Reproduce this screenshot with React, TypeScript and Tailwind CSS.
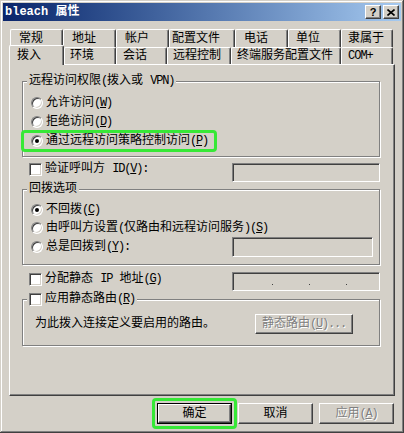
import React from 'react';

// classic 3D borders
const raised =
  'border border-t-white border-l-white border-r-[#404040] border-b-[#404040] shadow-[inset_-1px_-1px_#808080] bg-[#D4D0C8]';
const sunken =
  'border border-t-[#808080] border-l-[#808080] border-r-white border-b-white shadow-[inset_1px_1px_#404040,inset_-1px_-1px_#D4D0C8]';
const etched = 'border border-[#808080] shadow-[inset_1px_1px_#fff,1px_1px_#fff]';
const tabEdge =
  'border-t border-l border-r border-t-white border-l-white border-r-[#404040] rounded-t-[2px] shadow-[inset_-1px_0_#808080] bg-[#D4D0C8]';
const dimmed = 'text-[#808080] [text-shadow:1px_1px_0_#fff]';
const glow = 'rounded-[4px] border-[3px] border-[#37e837]';

// half-width latin, squeezed to ~6px per char like the dialog font
const A = ({ children }: { children: React.ReactNode }) => (
  <span className="tracking-[-1.2px]">{children}</span>
);

const Key = ({ k }: { k: string }) => (
  <A>
    (<u>{k}</u>)
  </A>
);

const Radio = ({ checked = false }: { checked?: boolean }) => (
  <span className={`flex h-[12px] w-[12px] shrink-0 items-center justify-center rounded-full bg-white ${sunken}`}>
    {checked && <span className="h-[4px] w-[4px] rounded-full bg-black" />}
  </span>
);

const Check = () => <span className={`block h-[13px] w-[13px] shrink-0 bg-white ${sunken}`} />;

const backTabs = [
  { label: '常规', cls: 'w-[53px] pl-[8px]' },
  { label: '地址', cls: 'w-[53px] pl-[8px]' },
  { label: '帐户', cls: 'w-[53px] pl-[8px]' },
  { label: '配置文件', cls: 'w-[66px] pl-[2px]' },
  { label: '电话', cls: 'w-[53px] pl-[8px]' },
  { label: '单位', cls: 'w-[53px] pl-[7px]' },
  { label: '隶属于', cls: 'w-[52px] pl-[6px]' },
];

const frontTabs = [
  { label: '环境', cls: 'w-[52px] pl-[5px]' },
  { label: '会话', cls: 'w-[51px] pl-[6px]' },
  { label: '远程控制', cls: 'w-[64px] pl-[5px]' },
  { label: '终端服务配置文件', cls: 'w-[110px] pl-[5px]' },
  { label: 'COM+', cls: 'w-[52px] pl-[6px] tracking-[-1px]' },
];

export default function App() {
  return (
    <div className="h-[433px] w-[404px] bg-[#D4D0C8] p-[3px] font-['Liberation_Mono','Noto_Sans_CJK_SC',monospace] text-[12px] leading-[14px] text-black shadow-[inset_-1px_-1px_#404040,inset_1px_1px_#D4D0C8,inset_-2px_-2px_#808080,inset_2px_2px_#fff]">
      {/* Title bar */}
      <div className="flex h-[18px] items-center bg-linear-to-r from-[#0A246A] to-[#A6CAF0] pl-[2px] pr-[2px]">
        <span className="font-bold text-white">bleach 属性</span>
        <div className="ml-auto flex gap-[2px]">
          <div className={`flex h-[14px] w-[16px] items-center justify-center font-['Liberation_Sans',sans-serif] text-[11px] font-bold leading-none ${raised}`}>
            ?
          </div>
          <div className={`flex h-[14px] w-[16px] items-center justify-center ${raised}`}>
            <svg width="8" height="7" viewBox="0 0 8 7">
              <path d="M0.5 0.5 L7.5 6.5 M7.5 0.5 L0.5 6.5" stroke="#000" strokeWidth="1.6" fill="none" />
            </svg>
          </div>
        </div>
      </div>

      {/* Tabs */}
      <div className="mt-[8px]">
        <div className="ml-[7px] flex h-[18px]">
          {backTabs.map((t) => (
            <div key={t.label} className={`flex h-[18px] items-center ${tabEdge} ${t.cls}`}>
              {t.label}
            </div>
          ))}
        </div>
        <div className="ml-[6px] flex h-[17px] items-start">
          <div className={`relative z-10 -mt-[2px] flex h-[20px] w-[55px] items-center pl-[7px] ${tabEdge}`}>拨入</div>
          {frontTabs.map((t) => (
            <div key={t.label} className={`flex h-[17px] items-center ${tabEdge} ${t.cls}`}>
              {t.label}
            </div>
          ))}
        </div>
      </div>

      {/* Panel */}
      <div className={`mx-[6px] h-[332px] pl-[12px] pt-[9px] ${raised}`}>
        <fieldset className={`w-[358px] ${etched}`}>
          <legend className="ml-[4px] bg-[#D4D0C8] px-[2px] leading-[14px]">
            远程访问权限<A>(</A>拨入或 <A>VPN)</A>
          </legend>
          <div className="pb-[6px] pl-[8px] pt-[5px]">
            <div className="flex h-[19px] items-center gap-[3px]">
              <Radio />
              <span>
                允许访问<Key k="W" />
              </span>
            </div>
            <div className="flex h-[19px] items-center gap-[3px]">
              <Radio />
              <span>
                拒绝访问<Key k="D" />
              </span>
            </div>
            <div className={`-mb-[2px] -ml-[10px] -mt-[1px] flex h-[22px] w-[196px] items-center gap-[3px] pl-[7px] ${glow}`}>
              <Radio checked />
              <span>
                通过远程访问策略控制访问<Key k="P" />
              </span>
            </div>
          </div>
        </fieldset>

        <div className="mt-[6px] flex h-[19px] w-[358px] items-start pl-[7px]">
          <div className="flex items-center gap-[3px] leading-[13px]">
            <Check />
            <span>
              验证呼叫方 <A>ID</A><Key k="V" /><A>:</A>
            </span>
          </div>
          <div className={`ml-auto h-[19px] w-[148px] bg-[#D4D0C8] ${sunken}`} />
        </div>

        <fieldset className={`w-[358px] ${etched}`}>
          <legend className="ml-[4px] bg-[#D4D0C8] px-[2px] leading-[14px]">回拨选项</legend>
          <div className="pb-[7px] pl-[8px] pr-[6px] pt-[5px]">
            <div className="flex h-[18px] items-center gap-[3px]">
              <Radio checked />
              <span>
                不回拨<Key k="C" />
              </span>
            </div>
            <div className="flex h-[18px] items-center gap-[3px]">
              <Radio />
              <span>
                由呼叫方设置<A>(</A>仅路由和远程访问服务<A>)</A><Key k="S" />
              </span>
            </div>
            <div className="flex h-[20px] items-center gap-[3px]">
              <Radio />
              <span>
                总是回拨到<Key k="Y" /><A>:</A>
              </span>
              <div className={`ml-auto h-[20px] w-[141px] bg-[#D4D0C8] ${sunken}`} />
            </div>
          </div>
        </fieldset>

        <div className="mt-[7px] flex h-[19px] w-[358px] items-start pl-[7px]">
          <div className="mt-[1px] flex items-center gap-[3px] leading-[13px]">
            <Check />
            <span>
              分配静态 <A>IP</A> 地址<Key k="G" />
            </span>
          </div>
          <div className={`ml-auto flex h-[19px] w-[148px] items-end gap-[36px] bg-[#D4D0C8] pb-[5px] pl-[39px] ${sunken}`}>
            <span className="h-[1px] w-[1px] bg-[#404040]" />
            <span className="h-[1px] w-[1px] bg-[#404040]" />
            <span className="h-[1px] w-[1px] bg-[#404040]" />
          </div>
        </div>

        <fieldset className={`mt-[1px] w-[358px] ${etched}`}>
          <legend className="ml-[4px] bg-[#D4D0C8] px-[2px] leading-[14px]">
            <span className="flex items-center gap-[3px]">
              <Check />
              <span>
                应用静态路由<Key k="R" />
              </span>
            </span>
          </legend>
          <div className="mb-[11px] mt-[8px] flex h-[20px] items-center justify-between pl-[12px] pr-[26px]">
            <span>为此拨入连接定义要启用的路由。</span>
            <div className={`flex h-[20px] w-[98px] items-center justify-center ${raised} ${dimmed}`}>
              静态路由<Key k="U" /><A>...</A>
            </div>
          </div>
        </fieldset>
      </div>

      {/* Dialog buttons */}
      <div className="mt-[7px] flex h-[21px] justify-end gap-[6px] pr-[7px]">
        <div className={`-m-[5px] p-[2px] ${glow}`}>
          <div className="h-[21px] w-[75px] border border-black">
            <div className={`flex h-full w-full items-center justify-center ${raised}`}>确定</div>
          </div>
        </div>
        <div className={`flex h-[21px] w-[75px] items-center justify-center ${raised}`}>取消</div>
        <div className={`flex h-[21px] w-[75px] items-center justify-center ${raised} ${dimmed}`}>
          应用<Key k="A" />
        </div>
      </div>
    </div>
  );
}
